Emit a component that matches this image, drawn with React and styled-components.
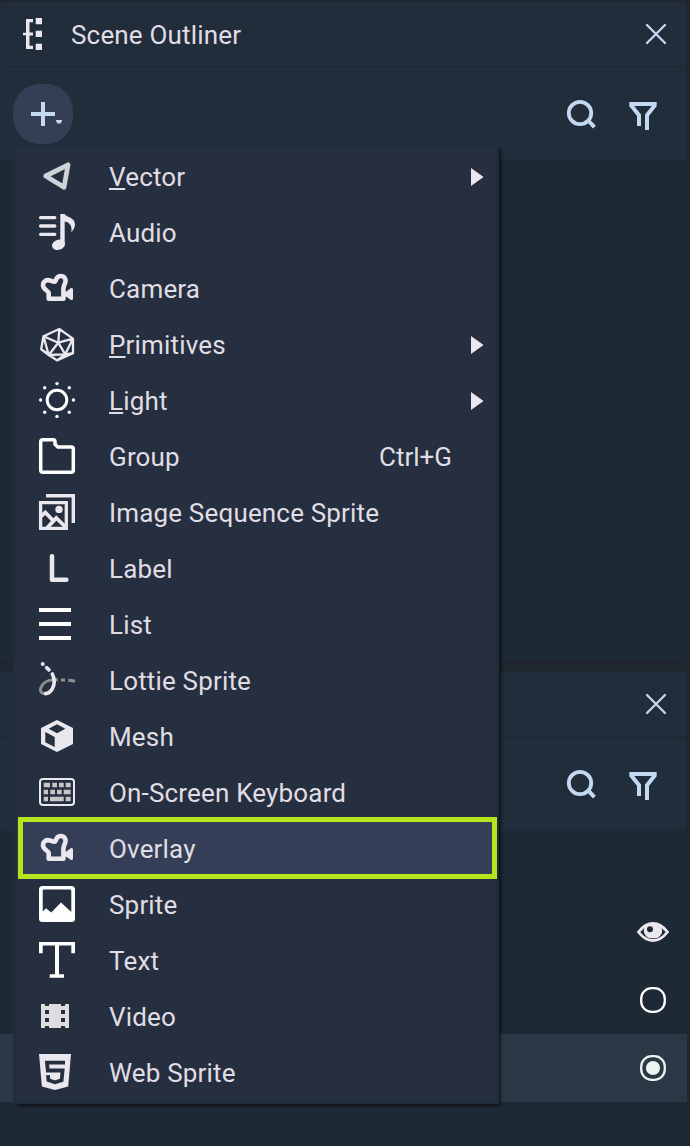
import React from "react";
import styled, { createGlobalStyle } from "styled-components";

const GlobalStyle = createGlobalStyle`
  * { box-sizing: border-box; }
  body {
    margin: 0;
    background: #1f2630;
    color: #e0dde4;
    font: 26px/56px Roboto, "Liberation Sans", sans-serif;
  }
  svg { display: block; flex: none; }
`;

const Screen = styled.main`
  position: relative;
  width: 690px;
  height: 1146px;
  padding: 2px 3px 1px 0;
  overflow: hidden;
  display: flex;
  flex-direction: column;
  gap: 12px;
`;

const Panel = styled.section`
  display: flex;
  flex-direction: column;
  background: #1e2936;
  border-radius: 4px 4px 0 0;
  height: ${(p) => p.$height}px;
`;

const TitleBar = styled.header`
  height: 64px;
  flex: none;
  margin-bottom: 2px;
  padding: 0 20px 0 21px;
  display: flex;
  align-items: center;
  background: #222d3c;
  border-radius: 4px;
`;

const Title = styled.h1`
  margin: 2px auto 0 24px;
  font-size: 26px;
  font-weight: 400;
  letter-spacing: 0.17px;
`;

const Toolbar = styled.div`
  height: 92px;
  flex: none;
  padding: 0 26px 0 13px;
  display: flex;
  align-items: center;
  justify-content: flex-end;
  gap: 26px;
  background: #222d3c;
  border-radius: 4px 4px 0 0;
`;

const AddButton = styled.button`
  width: 60px;
  height: 60px;
  margin: 0 auto 0 0;
  padding: 0;
  border: 0;
  border-radius: 27px;
  background: #343f55;
`;

const TreeRow = styled.div`
  height: 68px;
  padding-right: 17px;
  display: flex;
  align-items: center;
  justify-content: flex-end;
  background: ${(p) => (p.$selected ? "#2d3847" : "transparent")};
`;

const Tree = styled.div`
  display: flex;
  flex-direction: column;
  padding-top: 68px;
`;

const Menu = styled.ul`
  position: absolute;
  left: 13px;
  top: 144px;
  width: 486px;
  margin: 0;
  padding: 4px;
  list-style: none;
  background: #222d3c;
  box-shadow: 3px 3px 3px -1px rgba(0, 0, 0, 0.6);
  clip-path: inset(4px -8px -8px 0);
`;

const MenuItem = styled.li`
  position: relative;
  height: 56px;
  padding: 0 11px 0 20px;
  display: flex;
  align-items: center;
  background: ${(p) => (p.$active ? "#343f57" : "#252f3f")};
  ${(p) =>
    p.$active &&
    `&::after {
      content: "";
      position: absolute;
      inset: -3px -2px -3px 1px;
      border: 5px solid #b5e61d;
      z-index: 1;
    }`}
`;

const ItemLabel = styled.span`
  margin: 2px auto 0 32px;
  letter-spacing: 0.17px;
`;

const Mnemonic = styled.span`
  text-decoration: underline;
  text-decoration-thickness: 2px;
  text-underline-offset: 2px;
  text-decoration-skip-ink: none;
`;

const Shortcut = styled.span`
  margin: 2px 32px 0 0;
`;

const INK = "#eae7ee";
const BLUE = "#c3d9f2";
const line = (width, color = INK) => ({
  fill: "none",
  stroke: color,
  strokeWidth: width,
});

const Icon = ({ children, size = 40 }) => (
  <svg width={size} height={size} viewBox={`0 0 ${size} ${size}`}>
    {children}
  </svg>
);

const CameraIcon = () => (
  <Icon>
    <path
      d="M11.7 30.8V25C11 22.4 6 21.4 6 17.2C6 13.2 9.2 11.7 12 12.2C14.2 12.6 15.6 14 17.9 13.6C19.6 12.4 18.8 8 23.7 8C27.6 8 29.2 11 28.3 14.4C27.6 17 26.4 18 26.4 21V30.8Z"
      {...line(4.6)}
      strokeLinejoin="round"
    />
    <path d="M28 23.6H29.5L33.6 20.2Q36 19.2 36 21.6V30.4Q36 32.8 33.6 31.8L29.5 28.8H28Z" fill={INK} />
  </Icon>
);

const icons = {
  vector: (
    <Icon>
      <path d="M8.7 20L31 8.8L27 31.3Z" {...line(4.8, "#cfd2d6")} strokeLinejoin="round" />
    </Icon>
  ),
  audio: (
    <Icon>
      <path d="M3.6 5.7H17.8M3.6 14H17.8M3.6 22.3H17.8" {...line(3.3)} strokeLinecap="round" />
      <ellipse cx="21.5" cy="32.8" rx="6.7" ry="5" transform="rotate(-18 21.5 32.8)" fill={INK} />
      <path d="M23.3 2H27.6C28.4 5 38 5 38 12.5Q38 16 34.3 20.5C35.4 15 33.5 10.2 27.7 9.4V32.5H23.3Z" fill={INK} />
    </Icon>
  ),
  camera: <CameraIcon />,
  primitives: (
    <Icon>
      <path
        d="M22.3 5L36 14.6V29.2L20 36.4L4.2 25.3L6.5 12.2ZM21.3 18.7L22.3 5M21.3 18.7L36 14.6L28.2 30.3ZM21.3 18.7L11.7 31L28.2 30.3L36 29.2M21.3 18.7L6.5 12.2L11.7 31L4.2 25.3M28.2 30.3L20 36.4L11.7 31"
        {...line(2.3)}
        strokeLinejoin="round"
      />
    </Icon>
  ),
  light: (
    <Icon>
      <circle cx="20" cy="20" r="9.8" {...line(3, "#fff")} />
      <g fill="#fff">
        <circle cx="20" cy="3.6" r="1.7" />
        <circle cx="20" cy="36.4" r="1.7" />
        <circle cx="3.6" cy="20" r="1.7" />
        <circle cx="36.4" cy="20" r="1.7" />
        <circle cx="7.7" cy="7.7" r="1.7" />
        <circle cx="32.3" cy="7.7" r="1.7" />
        <circle cx="7.7" cy="32.3" r="1.7" />
        <circle cx="32.3" cy="32.3" r="1.7" />
      </g>
    </Icon>
  ),
  group: (
    <Icon>
      <path
        d="M5.7 3.7H16Q18 3.7 18 5.7V8.3L20.8 11H34.3Q36.3 11 36.3 13V34.3Q36.3 36.3 34.3 36.3H5.7Q3.7 36.3 3.7 34.3V5.7Q3.7 3.7 5.7 3.7Z"
        {...line(3.5, "#fff")}
      />
    </Icon>
  ),
  sequence: (
    <Icon>
      <path d="M9 3.7H36.3V31" {...line(3.4)} />
      <path d="M3.6 10.7H29.3V36.4H3.6Z" {...line(3.3)} />
      <circle cx="22" cy="17.4" r="3.7" fill={INK} />
      <path d="M4 24.5L8.3 20.4L17 29.5M9.5 36.5L19.3 26L29 35.5" {...line(3.7)} />
    </Icon>
  ),
  label: (
    <Icon>
      <path d="M15 8.2V31.8H29.4" {...line(4.5)} strokeLinecap="round" strokeLinejoin="round" />
    </Icon>
  ),
  list: (
    <Icon>
      <path d="M2 6H34M2 20H34M2 34H34" {...line(4, "#fff")} />
    </Icon>
  ),
  lottie: (
    <Icon>
      <path d="M9 33.6C4.5 34 2.8 31.5 3.7 28C5.2 23.6 10 19.8 17 19.8H20.8M24 20H28M31.2 20.2Q34 20.4 38 21.2" {...line(3, "#8f8e90")} />
      <circle cx="5.7" cy="4" r="2" fill={INK} />
      <path d="M9.6 7.6L12 9.8M15.3 14C18 19.5 17.4 25 15.2 29Q12.5 33.5 8.6 33.6" {...line(3.6)} strokeLinecap="round" />
    </Icon>
  ),
  mesh: (
    <Icon>
      <path
        fillRule="evenodd"
        fill={INK}
        d="M20 4L36 12V28L20 36L4 28V12ZM20 8.3L11.7 12.7L20 17.3L28.3 12.7ZM8.3 16V26.3L17.7 31V21Z"
      />
    </Icon>
  ),
  keyboard: (
    <Icon>
      <rect x="3" y="7" width="34" height="26" rx="3" {...line(2)} />
      <path
        d="M6.7 13H13M15.3 13H20M22 13H26.7M28.7 13H33.7M6.7 20H11M13.3 20H18M20 20H24.7M26.7 20H33.7M6.7 27H11M13 27H26.7M28.7 27H33.7"
        {...line(4.3, "#c6c5c7")}
      />
    </Icon>
  ),
  sprite: (
    <Icon>
      <path
        fillRule="evenodd"
        fill="#fff"
        d="M5.5 2H34.5Q38 2 38 5.5V34.5Q38 38 34.5 38H5.5Q2 38 2 34.5V5.5Q2 2 5.5 2ZM5.7 7V27.6L9 24.3L14.2 28.6L24 18.4L34.3 28V7Q34.3 5.6 33 5.6H7Q5.7 5.6 5.7 7Z"
      />
    </Icon>
  ),
  text: (
    <Icon>
      <path d="M2 2H38V13.3H34.3V5.5H22V34.3H27V37.8H12.7V34.3H18V5.5H5.7V13.3H2Z" fill="#fff" />
    </Icon>
  ),
  video: (
    <Icon>
      <path
        fillRule="evenodd"
        fill="#dddddf"
        d="M4 8H8V10H12V8H24V10H28V8H32V32H28V30H24V32H12V30H8V32H4ZM8 14V18H12V14ZM8 22V26H12V22ZM24 14V18H28V14ZM24 22V26H28V22Z"
      />
    </Icon>
  ),
  web: (
    <Icon>
      <path d="M2 2H34L31.2 34.6L18 38L4.9 34.6Z" fill={INK} />
      <path d="M28 10.6H10L10.8 18.5H25.6L24.6 28.2L18 30.3L11.4 28.2L11 23.2" {...line(3.8, "#252f3f")} />
    </Icon>
  ),
};

const OutlinerIcon = () => (
  <svg width="26" height="36" viewBox="0 0 26 36" fill={INK}>
    <path d="M14.7 2H21V8.3H14.7ZM14.7 14.7H21V21H14.7ZM14.7 27.7H21V34H14.7Z" />
    <path d="M5 3H12V6.2H8.5V16.4H12V19.6H8.5V29.8H12V33H5V19.3H2V16.7H5Z" />
  </svg>
);

const CloseIcon = () => (
  <Icon size={22}>
    <path d="M2 2L20 20M20 2L2 20" {...line(2.3, BLUE)} strokeLinecap="round" />
  </Icon>
);

const SearchIcon = () => (
  <Icon size={36}>
    <circle cx="17" cy="17" r="11.2" {...line(3.8, BLUE)} />
    <path d="M24.8 24L31.4 31.2" {...line(4, BLUE)} />
  </Icon>
);

const FilterIcon = () => (
  <Icon size={36}>
    <path d="M14 30V19.2L6.3 9.6V8H29.7V9.6L22 19.2V34" {...line(4, BLUE)} />
  </Icon>
);

const PlusIcon = () => (
  <Icon size={60}>
    <path d="M18 30H42M30 18V42" {...line(4, BLUE)} />
    <path d="M42.6 36H49.4L47.6 39.6H44.4Z" fill={BLUE} />
  </Icon>
);

const EyeIcon = () => (
  <svg width="34" height="24" viewBox="0 0 34 24">
    <path d="M2.5 12Q9 3.5 17 3.5T31.5 12Q25 20.5 17 20.5T2.5 12Z" {...line(2.8)} />
    <path
      fillRule="evenodd"
      fill={INK}
      d="M17 3A8 7.7 0 1 1 17 18.2A8 7.7 0 1 1 17 3ZM14 6.2A3 3 0 1 0 14 12.2A3 3 0 1 0 14 6.2Z"
    />
  </svg>
);

const RadioIcon = ({ on }) => (
  <Icon size={34}>
    <rect x="5.2" y="5.2" width="23.6" height="23.6" rx="10.5" {...line(2.3, on ? "#e8f5f3" : "#fff")} />
    {on && <circle cx="17" cy="17" r="7.1" fill="#e8f5f3" />}
  </Icon>
);

const ArrowIcon = () => (
  <svg width="13" height="20" viewBox="0 0 13 20">
    <path d="M0 2L12.6 11L0 20Z" fill={INK} />
  </svg>
);

const items = [
  { icon: "vector", label: "Vector", submenu: true },
  { icon: "audio", label: "Audio" },
  { icon: "camera", label: "Camera" },
  { icon: "primitives", label: "Primitives", submenu: true },
  { icon: "light", label: "Light", submenu: true },
  { icon: "group", label: "Group", shortcut: "Ctrl+G" },
  { icon: "sequence", label: "Image Sequence Sprite" },
  { icon: "label", label: "Label" },
  { icon: "list", label: "List" },
  { icon: "lottie", label: "Lottie Sprite" },
  { icon: "mesh", label: "Mesh" },
  { icon: "keyboard", label: "On-Screen Keyboard" },
  { icon: "camera", label: "Overlay", active: true },
  { icon: "sprite", label: "Sprite" },
  { icon: "text", label: "Text" },
  { icon: "video", label: "Video" },
  { icon: "web", label: "Web Sprite" },
];

export default function App() {
  return (
    <>
      <GlobalStyle />
      <Screen>
        <Panel $height={658}>
          <TitleBar>
            <OutlinerIcon />
            <Title>Scene Outliner</Title>
            <CloseIcon />
          </TitleBar>
          <Toolbar>
            <AddButton aria-label="Add">
              <PlusIcon />
            </AddButton>
            <SearchIcon />
            <FilterIcon />
          </Toolbar>
        </Panel>
        <Panel $height={473}>
          <TitleBar>
            <Title />
            <CloseIcon />
          </TitleBar>
          <Toolbar>
            <SearchIcon />
            <FilterIcon />
          </Toolbar>
          <Tree>
            <TreeRow>
              <EyeIcon />
            </TreeRow>
            <TreeRow>
              <RadioIcon />
            </TreeRow>
            <TreeRow $selected>
              <RadioIcon on />
            </TreeRow>
          </Tree>
        </Panel>
        <Menu>
          {items.map(({ icon, label, submenu, shortcut, active }) => (
            <MenuItem key={label} $active={active}>
              {icons[icon]}
              <ItemLabel>
                {submenu ? (
                  <>
                    <Mnemonic>{label[0]}</Mnemonic>
                    {label.slice(1)}
                  </>
                ) : (
                  label
                )}
              </ItemLabel>
              {shortcut && <Shortcut>{shortcut}</Shortcut>}
              {submenu && <ArrowIcon />}
            </MenuItem>
          ))}
        </Menu>
      </Screen>
    </>
  );
}
